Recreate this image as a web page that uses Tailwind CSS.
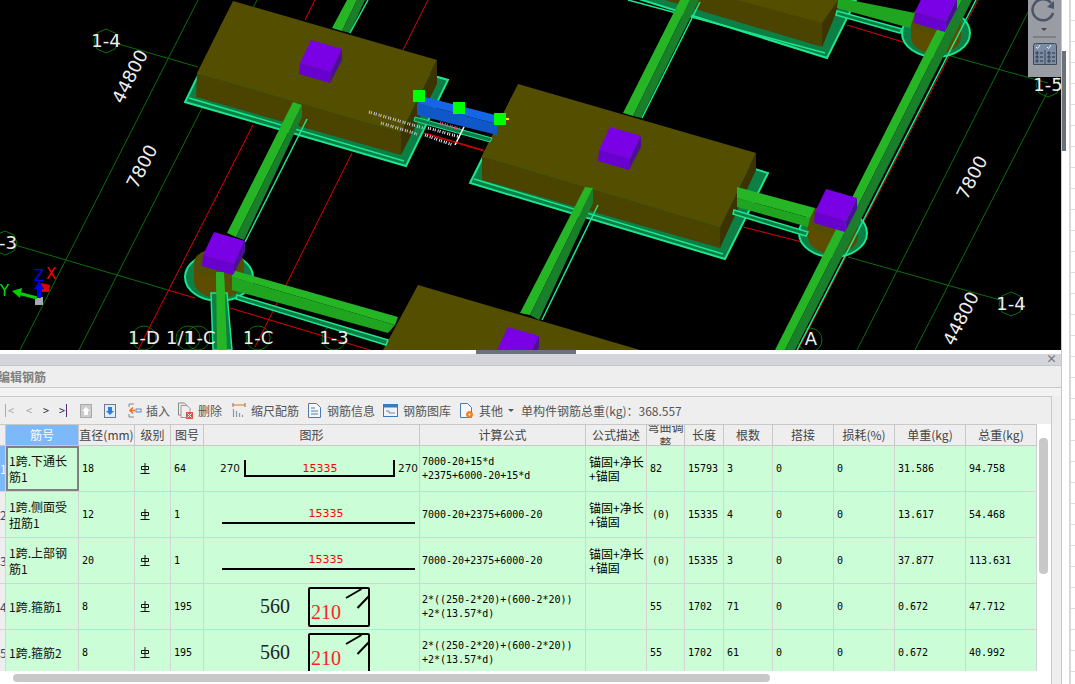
<!DOCTYPE html>
<html lang="zh">
<head>
<meta charset="utf-8">
<script src="https://cdn.jsdelivr.net/npm/@tailwindcss/browser@4"></script>
</head>
<body class="m-0">
<div class="w-[1075px] h-[684px] flex overflow-hidden bg-white font-['Noto_Sans_CJK_SC','Liberation_Sans',sans-serif] text-[12px] text-[#444]">
  <div class="w-[1062px] h-full flex flex-col border-r border-[#c8c8c8] bg-[#eee]">
    <!-- 3D viewport -->
    <div class="relative h-[350px] bg-black overflow-hidden shrink-0">
      <svg class="block" width="1061" height="350" viewBox="0 0 1061 350" font-family="'DejaVu Sans','Liberation Sans',sans-serif">
        <defs>
          <g id="cube">
            <polygon points="0,0 31,9 20,32 -11,23" fill="#7a00e6"/>
            <polygon points="-11,23 20,32 19,43 -12,34" fill="#6800cf"/>
            <polygon points="31,9 31,20 19,43 20,32" fill="#4a1099"/>
          </g>
          <g id="pier">
            <ellipse cx="0" cy="0" rx="34" ry="24" fill="#0b7f45" stroke="#1de68e" stroke-width="2"/>
            <path d="M-25,-14 V4 A25,17 0 0 0 25,4 V-14 Z" fill="#5c4d00"/>
            <ellipse cx="0" cy="-14" rx="25" ry="15" fill="#544f00"/>
          </g>
        </defs>
        <g stroke="#0b6e0b" stroke-width="1" fill="none">
          <line x1="198" y1="0" x2="20" y2="350"/>
          <line x1="257" y1="0" x2="79" y2="350"/>
          <line x1="115" y1="43" x2="198" y2="67"/>
          <line x1="15" y1="245" x2="168" y2="290"/>
          <line x1="1028" y1="12" x2="857" y2="350"/>
          <line x1="1047" y1="93" x2="915" y2="350"/>
          <line x1="848" y1="257" x2="1000" y2="300"/>
          <line x1="947" y1="55" x2="1048" y2="83"/>
          <polygon points="106,29 115,33 118,41 115,49 106,53 97,49 94,41 97,33"/>
          <polygon points="1011,292 1020,296 1023,304 1020,312 1011,316 1002,312 999,304 1002,296"/>
          <polygon points="1048,73 1057,77 1060,85 1057,93 1048,97 1039,93 1036,85 1039,77"/>
          <polygon points="5,231 14,235 17,243 14,251 5,255 -4,251 -7,243 -4,235"/>
          <circle cx="144" cy="338" r="12"/><circle cx="188" cy="338" r="12"/><circle cx="198" cy="338" r="12"/>
          <circle cx="258" cy="338" r="12"/><circle cx="334" cy="338" r="12"/><circle cx="810" cy="340" r="12"/>
        </g>
        <g stroke="#e00000" stroke-width="1" fill="none">
          <line x1="428" y1="0" x2="403" y2="50"/>
          <line x1="315" y1="0" x2="305" y2="20"/>
          <line x1="253" y1="125" x2="138" y2="350"/>
          <line x1="352" y1="153" x2="255" y2="347"/>
          <line x1="168" y1="290" x2="195" y2="298"/>
          <line x1="230" y1="308" x2="370" y2="350"/>
          <line x1="423" y1="133" x2="487" y2="152"/>
          <line x1="743" y1="227" x2="802" y2="242"/>
          <line x1="847" y1="25" x2="903" y2="42"/>
          <line x1="978" y1="0" x2="798" y2="350"/>
        </g>
        <!-- slabs -->
        <g fill="#0b7f45" stroke="#1de68e" stroke-width="2">
          <polygon points="227,16 448,80 406,166 185,102"/>
          <polygon points="513,97 768,173 725,259 470,183"/>
          <polygon points="623,-6 827,58 856,0"/>
        </g>
        <g fill="none" stroke="#1de68e" stroke-width="1.5">
          <line x1="189" y1="98" x2="404" y2="161"/>
          <line x1="474" y1="179" x2="723" y2="254"/>
          <line x1="628" y1="0" x2="825" y2="53"/>
        </g>
        <!-- piers -->
        <use href="#pier" x="219" y="277"/>
        <use href="#pier" x="833" y="233"/>
        <use href="#pier" x="936" y="33"/>
        <!-- blocks -->
        <polygon points="197,73 401,132 401,155 196,97" fill="#4b4300"/>
        <polygon points="437,60 437,84 401,155 401,132" fill="#3b3400"/>
        <polygon points="233,1 437,60 401,132 197,73" fill="#544f00"/>
        <polygon points="482,156 720,227 720,248 482,180" fill="#4b4300"/>
        <polygon points="756,153 756,170 720,248 720,227" fill="#3b3400"/>
        <polygon points="518,84 756,153 720,227 482,156" fill="#544f00"/>
        <polygon points="418,285 640,350 383,350" fill="#544f00"/>
        <polygon points="665,0 822,47 838,8 838,0" fill="#4b4300"/>
        <polygon points="838,0 838,8 822,47 822,23" fill="#3b3400"/>
        <polygon points="737,0 838,0 822,23" fill="#544f00"/>
        <!-- beams: diagonal -->
        <polygon points="332,28 342,31 357,0 347,0" fill="#25b525"/>
        <polygon points="342,31 350,33 365,0 357,0" fill="#1a7f2a"/>
        <line x1="350" y1="33" x2="368" y2="0" stroke="#1de68e" stroke-width="1.5"/>
        <polygon points="680,0 690,0 633,116 623,113" fill="#25b525"/>
        <polygon points="690,0 699,0 641,118 633,116" fill="#1a7f2a"/>
        <line x1="700" y1="2" x2="642" y2="118" stroke="#1de68e" stroke-width="1.5"/>
        <polygon points="952,0 962,0 785,350 775,350" fill="#25b525"/>
        <polygon points="962,0 972,0 795,350 785,350" fill="#1a7f2a"/>
        <line x1="976" y1="0" x2="797" y2="350" stroke="#1de68e" stroke-width="1.5"/>
        <polygon points="293,102 302,105 236,237 227,233" fill="#25b525"/>
        <polygon points="302,105 302,117 244,240 236,237" fill="#1a7f2a"/>
        <line x1="307" y1="119" x2="245" y2="242" stroke="#1de68e" stroke-width="1.5"/>
        <polygon points="585,187 593,188 530,315 520,313" fill="#25b525"/>
        <polygon points="593,188 593,203 539,320 530,315" fill="#1a7f2a"/>
        <line x1="598" y1="205" x2="542" y2="320" stroke="#1de68e" stroke-width="1.5"/>
        <polygon points="211,293 227,293 232,350 213,350" fill="#0b7f45" stroke="#1de68e" stroke-width="1.5"/>
        <polygon points="216,272 224,272 227,350 217,350" fill="#25b525"/>
        <!-- beams: horizontal -->
        <polygon points="237,295 388,340 386,345 236,299" fill="#0b7f45" stroke="#1de68e" stroke-width="1.500"/>
        <polygon points="232,270 398,317 395,325 232,277" fill="#25b525"/>
        <polygon points="232,277 395,325 388,333 232,290" fill="#20a520"/>
        <polygon points="734,210 808,232 806,236 733,214" fill="#0b7f45" stroke="#1de68e" stroke-width="1.500"/>
        <polygon points="737,187 815,208 810,218 737,198" fill="#25b525"/>
        <polygon points="737,198 810,218 808,227 737,207" fill="#20a520"/>
        <polygon points="837,11 902,29 900,33 836,15" fill="#0b7f45" stroke="#1de68e" stroke-width="1.500"/>
        <polygon points="850,0 915,13 910,28 837,8 838,0" fill="#20a520"/>
        <!-- cubes -->
        <use href="#cube" x="311" y="40"/>
        <use href="#cube" x="610" y="127"/>
        <use href="#cube" x="214" y="232"/>
        <use href="#cube" x="826" y="189"/>
        <use href="#cube" x="926" y="-11"/>
        <use href="#cube" x="508" y="327"/>
        <polygon points="216,272 224,274 225,300 217,300" fill="#25b525"/>
        <!-- selected beam -->
        <polygon points="415,117 492,138 490,142 414,121" fill="#0b7f45" stroke="#1de68e"/>
        <polygon points="425,97 503,117 497,124 417,103" fill="#1466e6"/>
        <polygon points="417,103 497,124 497,135 417,115" fill="#1058c8"/>
        <rect x="413" y="90" width="12" height="12" fill="#00ff00"/>
        <rect x="453" y="102" width="12" height="12" fill="#00ff00"/>
        <rect x="494" y="113" width="12" height="12" fill="#00ff00"/>
        <rect x="506" y="118" width="3" height="2" fill="#ffe000"/>
        <g fill="none" stroke-width="3" stroke-dasharray="1 1 1 2">
          <line x1="369" y1="112" x2="423" y2="128" stroke="#c8c8d8"/>
          <line x1="381" y1="123" x2="417" y2="134" stroke="#c8c8d8"/>
          <line x1="428" y1="128" x2="460" y2="137" stroke="#eee"/>
          <line x1="425" y1="135" x2="453" y2="145" stroke="#eee"/>
          <line x1="440" y1="123" x2="460" y2="129" stroke="#f04a9a"/>
        </g>
        <line x1="464" y1="127" x2="455" y2="145" stroke="#fff" stroke-width="1.5"/>
        <line x1="425" y1="133" x2="483" y2="150" stroke="#e00000"/>
        <!-- labels -->
        <g fill="#eee" font-size="18">
          <text x="106" y="47" text-anchor="middle">1-4</text>
          <text x="1011" y="310" text-anchor="middle">1-4</text>
          <text x="1048" y="91" text-anchor="middle">1-5</text>
          <text x="8" y="249" text-anchor="middle">-3</text>
          <text x="144" y="344" text-anchor="middle">1-D</text>
          <text x="166" y="344">1/1</text><text x="185" y="344">1-C</text>
          <text x="258" y="344" text-anchor="middle">1-C</text>
          <text x="334" y="344" text-anchor="middle">1-3</text>
          <text x="811" y="345" text-anchor="middle">A</text>
          <text transform="translate(131,77) rotate(-63)" text-anchor="middle" dominant-baseline="middle">44800</text>
          <text transform="translate(143,167) rotate(-63)" text-anchor="middle" dominant-baseline="middle">7800</text>
          <text transform="translate(973,178) rotate(-63)" text-anchor="middle" dominant-baseline="middle">7800</text>
          <text transform="translate(962,319) rotate(-63)" text-anchor="middle" dominant-baseline="middle">44800</text>
        </g>
        <!-- axis -->
        <g font-size="15">
          <text x="0" y="296" fill="#00e000">Y</text>
          <text x="34" y="281" fill="#0000ff">Z</text>
          <text x="46" y="279" fill="#ff0000">X</text>
        </g>
        <polygon points="41,283 50,285 49,292 42,292" fill="#e00000"/>
        <polygon points="35,297 43,297 43,305 35,305" fill="#aaa"/>
        <line x1="37" y1="298" x2="18" y2="293" stroke="#00d000" stroke-width="3"/>
        <polygon points="12,291 22,288 20,298" fill="#00d000"/>
        <line x1="39" y1="298" x2="39" y2="284" stroke="#0000f0" stroke-width="4"/>
        <polygon points="39,281 44,289 34,289" fill="#0000f0"/>
      </svg>
      <!-- floating tools -->
      <div class="absolute left-[1028px] top-0 w-[33px] h-[77px] bg-[#9a9ca3]">
        <svg class="block" width="33" height="77" viewBox="0 0 33 77" fill="none">
          <path d="M23 3 A10.500 10.500 0 1 0 25 13" stroke="#4a5568" stroke-width="2.500"/>
          <polygon points="26,1 26,9 19,7" fill="#4a5568"/>
          <polygon points="13,28 19,28 16,31" fill="#3d4a5c"/>
          <line x1="5" y1="37" x2="28" y2="37" stroke="#5c626c"/>
          <path d="M5.500 64.500V45.500a2 2 0 0 1 2-2h19a2 2 0 0 1 2 2v19z" fill="#7c8ca4" stroke="#3d4a5c"/>
          <line x1="17" y1="50" x2="17" y2="64" stroke="#3d4a5c"/>
          <path d="M8 47l1.500 1.500L12 45M19 47l1.500 1.500L23 45" stroke="#e8edf4"/>
          <path d="M8 52h2v2H8zM8 56h2v2H8zM8 60h2v2H8zM20 52h2v2h-2zM20 56h2v2h-2zM20 60h2v2h-2z" stroke="#263040" stroke-width=".8"/>
          <path d="M12 53h3M12 57h3M12 61h3M24 53h3M24 57h3M24 61h3" stroke="#263040"/>
        </svg>
      </div>
    </div>
    <!-- splitter -->
    <div class="h-[4px] bg-white shrink-0 relative">
      <div class="absolute left-[476px] top-0 w-[100px] h-[4px] bg-[#6b727c]"></div>
    </div>
    <!-- panel -->
    <div class="flex-1 min-h-0 flex flex-col">
      <div class="h-[11px] bg-[#d4d5da] relative shrink-0">
        <span class="absolute right-[4px] top-[-3px] text-[11px] leading-[14px] font-bold text-[#777]">×</span>
      </div>
      <div class="h-[23px] bg-[#eee] border-b border-t border-[#c8c8c8] shrink-0 overflow-hidden leading-[21px] text-[#808080] font-semibold -indent-[2px]">编辑钢筋</div>
      <div class="h-[8px] bg-[#f2f2f2] shrink-0"></div>
      <div class="flex-1 min-h-0 w-[1052px] border-t border-r border-[#c8c8c8] flex flex-col">
        <!-- toolbar -->
        <div class="h-[27px] shrink-0 flex items-center pl-[5px] text-[#555]">
          <span class="flex items-center w-[19px] gap-[2px] text-[#aaa] text-[10px] leading-none font-['DejaVu_Sans_Mono']"><span class="w-px h-[13px] bg-[#aaa]"></span>&lt;</span>
          <span class="w-[19px] pl-[2px] text-[#aaa] text-[10px] leading-none font-['DejaVu_Sans_Mono']">&lt;</span>
          <span class="w-[14px] text-[#333] text-[10px] leading-none font-['DejaVu_Sans_Mono']">&gt;</span>
          <span class="flex items-center w-[23px] pl-[2px] gap-[1px] text-[#333] text-[10px] leading-none font-['DejaVu_Sans_Mono']">&gt;<span class="w-px h-[13px] bg-[#5a2a6a]"></span></span>
          <svg class="mr-[12px] shrink-0" width="12" height="14" viewBox="0 0 12 14"><rect x=".5" y=".5" width="11" height="13" fill="#ccc" stroke="#aaa"/><path d="M6 3 L10 7 H8 V11 H4 V7 H2 Z" fill="#fff"/></svg>
          <svg class="mr-[12px] shrink-0" width="12" height="14" viewBox="0 0 12 14"><rect x=".5" y=".5" width="11" height="13" fill="#e4eaf2" stroke="#6a7a90"/><path d="M6 11 L10 7 H8 V3 H4 V7 H2 Z" fill="#2e7dd6"/></svg>
          <svg class="mr-[4px] shrink-0" width="14" height="15" viewBox="0 0 14 15" fill="none"><path d="M1 1h5M1 1v3M1 11v3h5" stroke="#888"/><path d="M7 7.500H2M5 4.500l-3 3 3 3" stroke="#e8701a" stroke-width="1.500"/><rect x="8" y="6" width="5" height="3" stroke="#5a8ac8"/></svg>
          <span class="mr-[8px]">插入</span>
          <svg class="mr-[5px] shrink-0" width="15" height="17" viewBox="0 0 15 17" fill="none"><path d="M.5 1h6l3 3v9H.5z" stroke="#888"/><path d="M3 3.500h6l3 3v9H3z" stroke="#999" fill="#eee"/><rect x="8" y="10" width="7" height="7" fill="#e05050"/><path d="M9.500 11.500l4 4m0-4l-4 4" stroke="#fff"/></svg>
          <span class="mr-[10px]">删除</span>
          <svg class="mr-[5px] shrink-0" width="14" height="15" viewBox="0 0 14 15" fill="none"><path d="M1 2h12" stroke="#e8701a"/><path d="M1 0v4M13 0v4" stroke="#777"/><path d="M1.500 6v8M4.500 8v6M7.500 10v4M10.500 12v2" stroke="#8a9ab0" stroke-width="1.200"/></svg>
          <span class="mr-[9px]">缩尺配筋</span>
          <svg class="mr-[6px] shrink-0" width="13" height="15" viewBox="0 0 13 15" fill="none"><path d="M.5.500h8l4 4v10H.5z" fill="#f6f8fb" stroke="#4a7ab5"/><path d="M3 5h4M3 8h7M3 11h7" stroke="#4a7ab5"/></svg>
          <span class="mr-[8px]">钢筋信息</span>
          <svg class="mr-[5px] shrink-0" width="15" height="13" viewBox="0 0 15 13" fill="none"><rect x=".5" y=".5" width="14" height="12" fill="#eef3f9" stroke="#3a78c0"/><rect x=".5" y=".5" width="14" height="3" fill="#3a78c0"/><path d="M3 7h3v2h6" stroke="#7a8a9a"/></svg>
          <span class="mr-[9px]">钢筋图库</span>
          <svg class="mr-[5px] shrink-0" width="14" height="16" viewBox="0 0 14 16" fill="none"><path d="M.5.500h7l4 4v10H.5z" fill="#f6f8fb" stroke="#4a7ab5"/><circle cx="9.500" cy="11.500" r="3" fill="#f08020" stroke="#f08020"/><circle cx="9.500" cy="11.500" r="1" fill="#fff"/></svg>
          <span class="mr-[5px]">其他</span>
          <span class="w-0 h-0 border-x-[3px] border-x-transparent border-t-[3px] border-t-[#555] mr-[7px]"></span>
          <span>单构件钢筋总重(kg)：368.557</span>
        </div>
        <!-- table area -->
        <div class="flex-1 min-h-0 flex flex-col bg-white">
          <div class="flex-1 min-h-0 flex">
            <div class="w-[1037px] overflow-hidden shrink-0">
              <!-- header -->
              <div class="grid grid-cols-[6px_73px_56px_36px_33px_216px_166px_61px_38px_39px_49px_61px_61px_71px_71px] h-[22px] bg-[#eee] border-y border-[#c8c8c8] text-center leading-[20px] text-[#444] [&>div]:border-r [&>div]:border-[#c8c8c8]">
                <div></div>
                <div class="bg-[#7db8f8] text-white">筋号</div>
                <div class="whitespace-nowrap">直径(mm)</div>
                <div>级别</div>
                <div>图号</div>
                <div>图形</div>
                <div>计算公式</div>
                <div>公式描述</div>
                <div class="flex items-center justify-center overflow-hidden leading-[16px]"><span>弯曲调整</span></div>
                <div>长度</div>
                <div>根数</div>
                <div>搭接</div>
                <div>损耗(%)</div>
                <div>单重(kg)</div>
                <div>总重(kg)</div>
              </div>
              <!-- row 1 -->
              <div class="grid grid-cols-[6px_73px_56px_36px_33px_216px_166px_61px_38px_39px_49px_61px_61px_71px_71px] h-[46px] bg-[#cbfdd6] border-b border-[#d4d4d4] text-black font-['DejaVu_Sans_Mono','Noto_Sans_CJK_SC',monospace] text-[10px] [&>div]:border-r [&>div]:border-[#d4d4d4] [&>div]:flex [&>div]:items-center [&>div]:pl-[3px]">
                <div class="bg-[#7db8f8] !pl-0 text-white overflow-hidden font-['Noto_Sans_CJK_SC'] text-[12px]">1</div>
                <div class="!border-2 !border-[#808080] font-['Noto_Sans_CJK_SC'] text-[12px] leading-[16px] !pl-[1px] text-[#111]">1跨.下通长筋1</div>
                <div>18</div>
                <div class="!pl-[5px]"><svg width="10" height="11" viewBox="0 0 10 11" fill="none" stroke="#111"><path d="M5 0v10M1.500 3.500h7v3h-7zM.5 10.500h9"/></svg></div>
                <div>64</div>
                <div class="!p-0"><svg class="block" width="215" height="45" viewBox="0 0 215 45"><text x="16" y="26" font-size="10.500" fill="#111" font-family="'DejaVu Sans'">270</text><path d="M41 14V30H190V14" fill="none" stroke="#000" stroke-width="2"/><text x="116" y="26" font-size="11" fill="#f00" text-anchor="middle" font-family="'DejaVu Sans'">15335</text><text x="194" y="26" font-size="10.500" fill="#111" font-family="'DejaVu Sans'">270</text></svg></div>
                <div class="!pl-[2px] leading-[14px]">7000-20+15*d<br>+2375+6000-20+15*d</div>
                <div class="font-['Noto_Sans_CJK_SC'] text-[12px] leading-[14px]">锚固+净长<br>+锚固</div>
                <div>82</div>
                <div>15793</div>
                <div>3</div>
                <div>0</div>
                <div>0</div>
                <div>31.586</div>
                <div>94.758</div>
              </div>
              <!-- row 2 -->
              <div class="grid grid-cols-[6px_73px_56px_36px_33px_216px_166px_61px_38px_39px_49px_61px_61px_71px_71px] h-[46px] bg-[#cbfdd6] border-b border-[#d4d4d4] text-black font-['DejaVu_Sans_Mono','Noto_Sans_CJK_SC',monospace] text-[10px] [&>div]:border-r [&>div]:border-[#d4d4d4] [&>div]:flex [&>div]:items-center [&>div]:pl-[3px]">
                <div class="bg-[#eee] !pl-0 text-[#446] overflow-hidden font-['Noto_Sans_CJK_SC'] text-[12px]">2</div>
                <div class="font-['Noto_Sans_CJK_SC'] text-[12px] leading-[16px] !pl-[3px] text-[#111]">1跨.侧面受扭筋1</div>
                <div>12</div>
                <div class="!pl-[5px]"><svg width="10" height="11" viewBox="0 0 10 11" fill="none" stroke="#111"><path d="M5 0v10M1.500 3.500h7v3h-7zM.5 10.500h9"/></svg></div>
                <div>1</div>
                <div class="!p-0"><svg class="block" width="215" height="45" viewBox="0 0 215 45"><text x="122" y="25" font-size="11" fill="#f00" text-anchor="middle" font-family="'DejaVu Sans'">15335</text><line x1="18" y1="31" x2="211" y2="31" stroke="#000" stroke-width="2"/></svg></div>
                <div class="!pl-[2px]">7000-20+2375+6000-20</div>
                <div class="font-['Noto_Sans_CJK_SC'] text-[12px] leading-[14px]">锚固+净长<br>+锚固</div>
                <div class="!pl-[5px]">(0)</div>
                <div>15335</div>
                <div>4</div>
                <div>0</div>
                <div>0</div>
                <div>13.617</div>
                <div>54.468</div>
              </div>
              <!-- row 3 -->
              <div class="grid grid-cols-[6px_73px_56px_36px_33px_216px_166px_61px_38px_39px_49px_61px_61px_71px_71px] h-[46px] bg-[#cbfdd6] border-b border-[#d4d4d4] text-black font-['DejaVu_Sans_Mono','Noto_Sans_CJK_SC',monospace] text-[10px] [&>div]:border-r [&>div]:border-[#d4d4d4] [&>div]:flex [&>div]:items-center [&>div]:pl-[3px]">
                <div class="bg-[#eee] !pl-0 text-[#446] overflow-hidden font-['Noto_Sans_CJK_SC'] text-[12px]">3</div>
                <div class="font-['Noto_Sans_CJK_SC'] text-[12px] leading-[16px] !pl-[3px] text-[#111]">1跨.上部钢筋1</div>
                <div>20</div>
                <div class="!pl-[5px]"><svg width="10" height="11" viewBox="0 0 10 11" fill="none" stroke="#111"><path d="M5 0v10M1.500 3.500h7v3h-7zM.5 10.500h9"/></svg></div>
                <div>1</div>
                <div class="!p-0"><svg class="block" width="215" height="45" viewBox="0 0 215 45"><text x="122" y="25" font-size="11" fill="#f00" text-anchor="middle" font-family="'DejaVu Sans'">15335</text><line x1="18" y1="31" x2="211" y2="31" stroke="#000" stroke-width="2"/></svg></div>
                <div class="!pl-[2px]">7000-20+2375+6000-20</div>
                <div class="font-['Noto_Sans_CJK_SC'] text-[12px] leading-[14px]">锚固+净长<br>+锚固</div>
                <div class="!pl-[5px]">(0)</div>
                <div>15335</div>
                <div>3</div>
                <div>0</div>
                <div>0</div>
                <div>37.877</div>
                <div>113.631</div>
              </div>
              <!-- row 4 -->
              <div class="grid grid-cols-[6px_73px_56px_36px_33px_216px_166px_61px_38px_39px_49px_61px_61px_71px_71px] h-[46px] bg-[#cbfdd6] border-b border-[#d4d4d4] text-black font-['DejaVu_Sans_Mono','Noto_Sans_CJK_SC',monospace] text-[10px] [&>div]:border-r [&>div]:border-[#d4d4d4] [&>div]:flex [&>div]:items-center [&>div]:pl-[3px]">
                <div class="bg-[#eee] !pl-0 text-[#446] overflow-hidden font-['Noto_Sans_CJK_SC'] text-[12px]">4</div>
                <div class="font-['Noto_Sans_CJK_SC'] text-[12px] leading-[16px] !pl-[3px] text-[#111]">1跨.箍筋1</div>
                <div>8</div>
                <div class="!pl-[5px]"><svg width="10" height="11" viewBox="0 0 10 11" fill="none" stroke="#111"><path d="M5 0v10M1.500 3.500h7v3h-7zM.5 10.500h9"/></svg></div>
                <div>195</div>
                <div class="!p-0"><svg class="block" width="215" height="45" viewBox="0 0 215 45" font-family="'Liberation Serif',serif"><text x="56" y="29" font-size="20" fill="#222">560</text><rect x="105" y="4" width="60" height="38" rx="1" fill="none" stroke="#000" stroke-width="2"/><path d="M142 14L157.500 5M153.500 24L165 12" stroke="#000" stroke-width="2"/><text x="107" y="35" font-size="20" fill="#f22">210</text></svg></div>
                <div class="!pl-[2px] leading-[14px] whitespace-nowrap">2*((250-2*20)+(600-2*20))<br>+2*(13.57*d)</div>
                <div></div>
                <div>55</div>
                <div>1702</div>
                <div>71</div>
                <div>0</div>
                <div>0</div>
                <div>0.672</div>
                <div>47.712</div>
              </div>
              <!-- row 5 -->
              <div class="grid grid-cols-[6px_73px_56px_36px_33px_216px_166px_61px_38px_39px_49px_61px_61px_71px_71px] h-[46px] bg-[#cbfdd6] border-b border-[#d4d4d4] text-black font-['DejaVu_Sans_Mono','Noto_Sans_CJK_SC',monospace] text-[10px] [&>div]:border-r [&>div]:border-[#d4d4d4] [&>div]:flex [&>div]:items-center [&>div]:pl-[3px]">
                <div class="bg-[#eee] !pl-0 text-[#446] overflow-hidden font-['Noto_Sans_CJK_SC'] text-[12px]">5</div>
                <div class="font-['Noto_Sans_CJK_SC'] text-[12px] leading-[16px] !pl-[3px] text-[#111]">1跨.箍筋2</div>
                <div>8</div>
                <div class="!pl-[5px]"><svg width="10" height="11" viewBox="0 0 10 11" fill="none" stroke="#111"><path d="M5 0v10M1.500 3.500h7v3h-7zM.5 10.500h9"/></svg></div>
                <div>195</div>
                <div class="!p-0"><svg class="block" width="215" height="45" viewBox="0 0 215 45" font-family="'Liberation Serif',serif"><text x="56" y="29" font-size="20" fill="#222">560</text><rect x="105" y="4" width="60" height="38" rx="1" fill="none" stroke="#000" stroke-width="2"/><path d="M142 14L157.500 5M153.500 24L165 12" stroke="#000" stroke-width="2"/><text x="107" y="35" font-size="20" fill="#f22">210</text></svg></div>
                <div class="!pl-[2px] leading-[14px] whitespace-nowrap">2*((250-2*20)+(600-2*20))<br>+2*(13.57*d)</div>
                <div></div>
                <div>55</div>
                <div>1702</div>
                <div>61</div>
                <div>0</div>
                <div>0</div>
                <div>0.672</div>
                <div>40.992</div>
              </div>
            </div>
            <!-- vertical scrollbar -->
            <div class="flex-1 pt-[14px] pl-[2px] bg-white">
              <div class="w-[9px] h-[136px] rounded-[4px] bg-[#c8c8c8]"></div>
            </div>
          </div>
          <!-- horizontal scrollbar -->
          <div class="h-[13px] shrink-0 bg-white pl-[13px] pt-[3px]">
            <div class="w-[757px] h-[8px] rounded-[4px] bg-[#c8c8c8]"></div>
          </div>
        </div>
      </div>
    </div>
  </div>
  <!-- neighbouring window sliver -->
  <div class="flex-1 h-full flex bg-white">
    <div class="w-[4px] h-full pt-[51px] bg-white">
      <div class="h-[100px] bg-[#6b727c]"></div>
    </div>
    <div class="w-[3px]"></div>
    <div class="flex-1 border-l-2 border-[#d8d8d8] bg-[repeating-linear-gradient(to_bottom,transparent_0,transparent_20px,#ddd_20px,#ddd_21px)]"></div>
  </div>
</div>
</body>
</html>
